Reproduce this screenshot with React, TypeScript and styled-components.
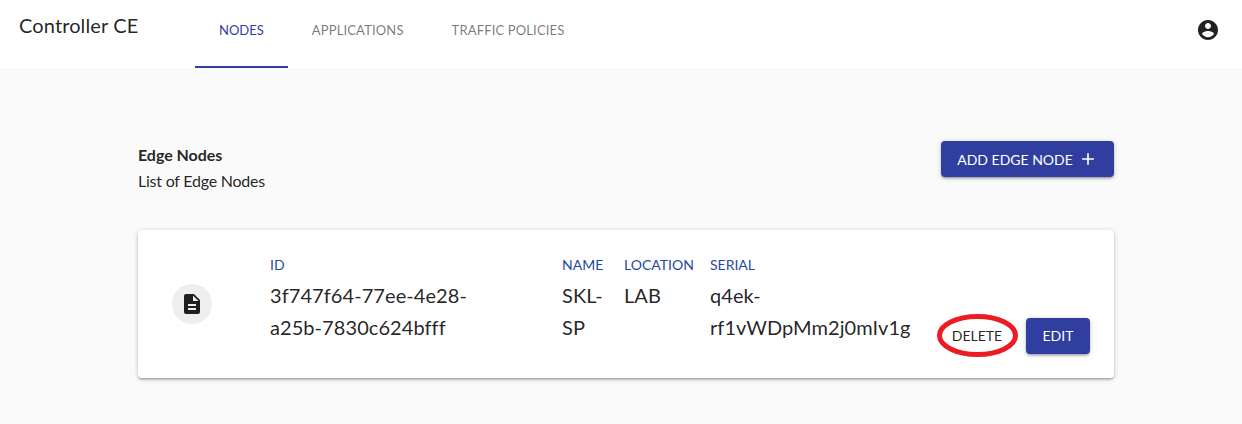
import React from 'react';
import styled, { createGlobalStyle } from 'styled-components';

const GlobalStyle = createGlobalStyle`
  *, *::before, *::after { box-sizing: border-box; }
  body {
    margin: 0;
    background: #fafafa;
    color: rgba(0, 0, 0, 0.87);
    font-family: Lato, sans-serif;
    -webkit-font-smoothing: antialiased;
  }
  button { font-family: inherit; cursor: pointer; }
`;

const raisedShadow =
  '0 1px 5px rgba(0,0,0,.2), 0 2px 2px rgba(0,0,0,.14), 0 3px 1px -2px rgba(0,0,0,.12)';

const Page = styled.div`
  display: flex;
  flex-direction: column;
  min-height: 100vh;
  background: #fafafa;
`;

const AppBar = styled.header`
  display: flex;
  height: 68px;
  padding: 0 22px 0 19px;
  background: #fff;
`;

const Brand = styled.h1`
  width: 176px;
  margin: 0;
  padding-top: 9px;
  font-size: 20px;
  font-weight: 400;
  line-height: 32px;
  letter-spacing: 0.006em;
  white-space: nowrap;
`;

const Tabs = styled.nav`
  display: flex;
  flex: 1;
`;

const Tab = styled.button<{ $active?: boolean }>`
  height: 68px;
  padding: 0 24px 7px;
  border: 0;
  border-bottom: 2px solid ${p => (p.$active ? '#303f9f' : 'transparent')};
  background: none;
  color: ${p => (p.$active ? '#303f9f' : 'rgba(0, 0, 0, 0.54)')};
  font-size: 13px;
  letter-spacing: ${p => (p.$active ? '0' : '0.15px')};
  white-space: nowrap;
`;

const AccountButton = styled.button`
  display: flex;
  align-self: flex-start;
  margin-top: 18px;
  padding: 0;
  border: 0;
  background: none;
`;

const Icon = styled.svg<{ $size: number }>`
  display: block;
  width: ${p => p.$size}px;
  height: ${p => p.$size}px;
  fill: currentColor;
`;

const Main = styled.main`
  width: 976px;
  margin: 73px 0 0 138px;
`;

const PageHead = styled.div`
  display: flex;
  justify-content: space-between;
  align-items: flex-start;
  height: 89px;
`;

const Heading = styled.div`
  padding-top: 1px;
  font-size: 16px;
  line-height: 26px;
`;

const HeadingTitle = styled.h2`
  margin: 0;
  font-size: 16px;
  font-weight: 700;
  letter-spacing: -0.05px;
`;

const HeadingText = styled.p`
  margin: 0;
  letter-spacing: -0.23px;
`;

const Button = styled.button<{ $text?: boolean; $width: number }>`
  display: flex;
  align-items: center;
  justify-content: center;
  width: ${p => p.$width}px;
  height: 36px;
  padding: 0;
  border: 0;
  border-radius: 4px;
  background: ${p => (p.$text ? 'transparent' : '#303f9f')};
  color: ${p => (p.$text ? 'rgba(0, 0, 0, 0.87)' : '#fff')};
  box-shadow: ${p => (p.$text ? 'none' : raisedShadow)};
  font-size: 14px;
  gap: 5px;
  white-space: nowrap;
`;

const Card = styled.section`
  display: flex;
  height: 148px;
  padding: 20px 24px 24px 34px;
  border-radius: 4px;
  background: #fff;
  box-shadow: ${raisedShadow};
`;

const Avatar = styled.div`
  display: flex;
  align-items: center;
  justify-content: center;
  width: 40px;
  height: 40px;
  margin: 34px 58px 0 0;
  border-radius: 50%;
  background: #eee;
`;

const Fields = styled.dl`
  display: grid;
  flex: 1;
  grid-template-columns: 292px 62px 86px 1fr;
  margin: 0;
`;

const Label = styled.dt`
  height: 29px;
  color: #1f4a9f;
  font-size: 14px;
  line-height: 30px;
`;

const Value = styled.dd`
  margin: 0;
  font-size: 20px;
  line-height: 32px;
  letter-spacing: 0.07px;
  white-space: pre-line;
`;

const Actions = styled.div`
  display: flex;
  align-self: flex-end;
  gap: 16px;
`;

const Highlight = styled.div`
  position: relative;
`;

const Ring = styled.svg`
  position: absolute;
  top: -4px;
  left: -7px;
  width: 81px;
  height: 43px;
  fill: none;
  stroke: #ed1c24;
  stroke-width: 5;
  pointer-events: none;
`;

const ButtonText = styled.span<{ $raised?: boolean }>`
  padding-bottom: ${p => (p.$raised ? '2px' : '0')};
`;

const fields = [
  { label: 'ID', value: '3f747f64-77ee-4e28-\na25b-7830c624bfff' },
  { label: 'NAME', value: 'SKL-\nSP' },
  { label: 'LOCATION', value: 'LAB' },
  { label: 'SERIAL', value: 'q4ek-\nrf1vWDpMm2j0mIv1g' },
];

export default function App() {
  return (
    <Page>
      <GlobalStyle />
      <AppBar>
        <Brand>Controller CE</Brand>
        <Tabs>
          <Tab $active>NODES</Tab>
          <Tab>APPLICATIONS</Tab>
          <Tab>TRAFFIC POLICIES</Tab>
        </Tabs>
        <AccountButton aria-label="Account">
          <Icon $size={24} viewBox="0 0 24 24" color="rgba(0,0,0,.87)">
            <path d="M12 2C6.48 2 2 6.48 2 12s4.48 10 10 10 10-4.48 10-10S17.52 2 12 2zm0 3c1.66 0 3 1.34 3 3s-1.34 3-3 3-3-1.34-3-3 1.34-3 3-3zm0 14.2c-2.5 0-4.71-1.28-6-3.22.03-1.99 4-3.08 6-3.08 1.99 0 5.97 1.09 6 3.08-1.29 1.94-3.5 3.22-6 3.22z" />
          </Icon>
        </AccountButton>
      </AppBar>
      <Main>
        <PageHead>
          <Heading>
            <HeadingTitle>Edge Nodes</HeadingTitle>
            <HeadingText>List of Edge Nodes</HeadingText>
          </Heading>
          <Button $width={173}>
            <ButtonText>ADD EDGE NODE</ButtonText>
            <Icon $size={20} viewBox="0 0 24 24">
              <path d="M19 13h-6v6h-2v-6H5v-2h6V5h2v6h6v2z" />
            </Icon>
          </Button>
        </PageHead>
        <Card>
          <Avatar>
            <Icon $size={24} viewBox="0 0 24 24">
              <path d="M14 2H6c-1.1 0-1.99.9-1.99 2L4 20c0 1.1.89 2 1.99 2H18c1.1 0 2-.9 2-2V8l-6-6zm2 16H8v-2h8v2zm0-4H8v-2h8v2zm-3-5V3.500L18.500 9H13z" />
            </Icon>
          </Avatar>
          <Fields>
            {fields.map(f => (
              <div key={f.label}>
                <Label>{f.label}</Label>
                <Value>{f.value}</Value>
              </div>
            ))}
          </Fields>
          <Actions>
            <Highlight>
              <Button $text $width={66}><ButtonText $raised>DELETE</ButtonText></Button>
              <Ring viewBox="0 0 81 43">
                <ellipse cx="40.5" cy="21.5" rx="38" ry="19" />
              </Ring>
            </Highlight>
            <Button $width={64}><ButtonText $raised>EDIT</ButtonText></Button>
          </Actions>
        </Card>
      </Main>
    </Page>
  );
}
